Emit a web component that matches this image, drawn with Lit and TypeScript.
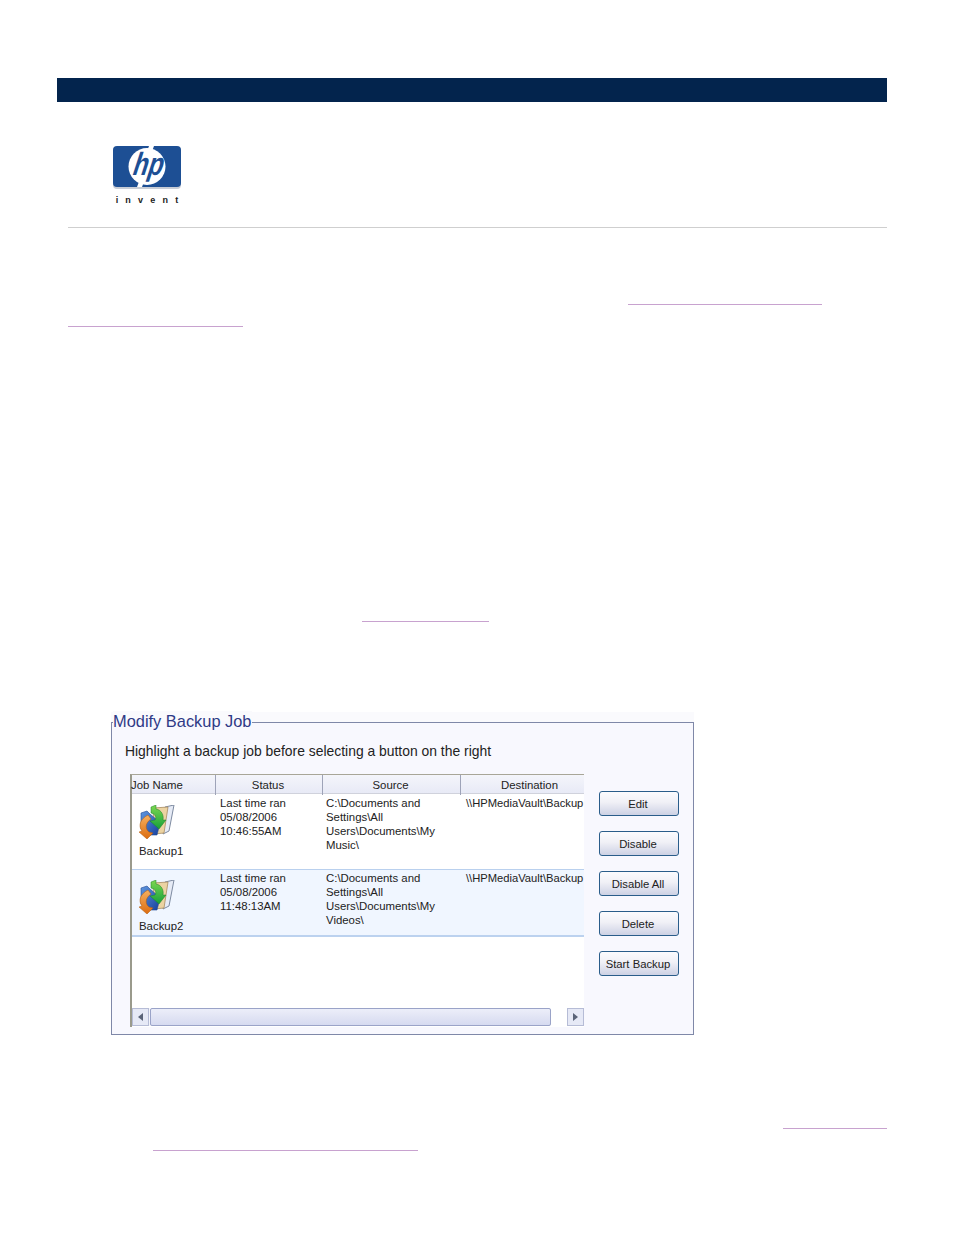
import { LitElement, html, css, svg } from "lit";
import { customElement } from "lit/decorators.js";

const backupIcon = svg`<svg class="job-icon" width="36" height="34" viewBox="0 0 36 34">
  <defs>
    <linearGradient id="bl" x1="0" y1="0" x2="1" y2="1"><stop offset="0" stop-color="#5f97e0"/><stop offset="1" stop-color="#173f9c"/></linearGradient>
    <linearGradient id="gr" x1="0" y1="0" x2="0" y2="1"><stop offset="0" stop-color="#7fd850"/><stop offset="1" stop-color="#15a03a"/></linearGradient>
    <linearGradient id="or" x1="0" y1="0" x2="0" y2="1"><stop offset="0" stop-color="#f6b060"/><stop offset="1" stop-color="#dc6c10"/></linearGradient>
  </defs>
  <path d="M26 2 L35 0 L30 26 L24 29 Z" fill="#e6ebf6" stroke="#7d8aa0" stroke-width="1"/>
  <path d="M14 3 L29 2 L25 28 L15 29 Z" fill="#ecd3a2" stroke="#a88c60" stroke-width=".8"/>
  <path d="M2 8 L8 6 L11 9 L18 15 L21 18 L18 30 L9 30 L2 24 Z" fill="url(#bl)" stroke="#244a90" stroke-width=".6"/>
  <path d="M9 10 C1 14 -1 21 3 26 L0 27 L8 34 L14 28 L10 27 C6 24 6 18 12 14 Z" fill="url(#or)" stroke="#b05808" stroke-width=".5"/>
  <path d="M12 2 L17 0 L17 4 C23 5 25 11 24 15 L27 15 L20 24 L11 16 L16 15 C18 12 16 9 12 8 Z" fill="url(#gr)" stroke="#1c8028" stroke-width=".5"/>
</svg>`;

interface Job { name: string; when: string[]; source: string[]; }
const jobs: Job[] = [
  { name: "Backup1", when: ["Last time ran", "05/08/2006", "10:46:55AM"], source: ["C:\\Documents and", "Settings\\All", "Users\\Documents\\My", "Music\\"] },
  { name: "Backup2", when: ["Last time ran", "05/08/2006", "11:48:13AM"], source: ["C:\\Documents and", "Settings\\All", "Users\\Documents\\My", "Videos\\"] },
];
const actions = ["Edit", "Disable", "Disable All", "Delete", "Start Backup"];

@customElement("app-root")
export class AppRoot extends LitElement {
  static styles = css`
    :host { display: block; width: 954px; height: 1235px; background: #fff; overflow: hidden;
      font-family: "Liberation Sans", Arial, sans-serif; color: #222; }
    .bar { margin: 78px 67px 0 57px; height: 24px; background: #03244d; }
    .logo { margin: 44px 0 0 113px; width: 68px; display: flex; flex-direction: column; align-items: center; }
    .logo svg { display: block; }
    .invent { margin-top: 6px; font: 700 9px/10px "Liberation Sans", sans-serif; letter-spacing: 7.2px; color: #222; white-space: nowrap; margin-right: -7px; }
    .rule { margin: 22px 67px 0 68px; height: 1px; background: #cfcfcf; }
    .link { height: 1px; background: #c8a2cf; }
    .l1 { margin: 76px 0 0 628px; width: 194px; }
    .l2 { margin: 21px 0 0 68px; width: 175px; }
    .l3 { margin: 294px 0 0 362px; width: 127px; }
    .l4 { margin: 93px 0 0 783px; width: 104px; }
    .l5 { margin: 21px 0 0 153px; width: 265px; }
    .window { margin: 100px 0 0 111px; width: 583px; height: 313px; box-sizing: border-box; position: relative;
      border: 1px solid #7f88a8; background: #f8f8fe; padding: 19px 14px 7px 18px; display: flex; flex-direction: column; }
    .window::before { content: ""; position: absolute; left: -1px; right: -1px; top: -11px; height: 10px; background: #fafafd; }
    .title { position: absolute; left: 1px; top: -12px; padding-right: 1px; background: linear-gradient(#fafafd 50%, #f8f8fe 50%);
      font: 400 16.4px/20px "Liberation Sans", sans-serif; color: #2f3a86; white-space: nowrap; }
    .hint { margin-left: -5px; font-size: 13.9px; line-height: 18px; color: #222; white-space: nowrap; }
    .body { display: flex; flex: 1; gap: 15px; margin-top: 14px; min-height: 0; }
    .table { width: 454px; box-sizing: border-box; background: #fff; border-left: 2px solid #9a9a8c; border-top: 1px solid #a8a698;
      display: flex; flex-direction: column; font-size: 11.4px; line-height: 14px; }
    .head, .row { display: grid; grid-template-columns: 84px 107px 138px 123px; }
    .head { height: 19px; box-sizing: border-box; border-bottom: 1px solid #d0d2dc; background: linear-gradient(#f4f5fb, #e8eaf6); }
    .head div { text-align: center; line-height: 20px; border-right: 1px solid #9ea3b8; white-space: nowrap; padding-right: 2px; box-sizing: border-box; }
    .head div:first-child { text-align: left; padding-right: 0; margin-left: -1px; }
    .head div:last-child { border-right: 0; padding: 0 0 0 14px; }
    .row { box-sizing: border-box; height: 76px; padding-top: 2px; border-bottom: 1px solid #b9d0ee; }
    .row.second { height: 67px; padding-top: 1px; background: #f0f6ff; border-bottom: 2px solid #bcd2ef; }
    .cell { padding-left: 4px; white-space: nowrap; }
    .cell.src { padding-left: 3px; }
    .cell.dest { padding-left: 5px; font-size: 11.2px; }
    .name { padding: 9px 0 0 7px; }
    .job-icon { display: block; }
    .name span { display: block; margin-top: 5px; }
    .empty { flex: 1; }
    .scroll { height: 18px; margin-bottom: 1px; display: flex; align-items: stretch; background: #f4f5fb; }
    .sb { width: 17px; box-sizing: border-box; border: 1px solid #b6bcd6; background: #e6e9f6; display: flex; align-items: center; justify-content: center; }
    .thumb { width: 401px; margin-left: 1px; box-sizing: border-box; border: 1px solid #9aa3c8; border-radius: 2px; background: linear-gradient(#eceef9, #d6daf0); }
    .gap { flex: 1; background: #fff; }
    .arrow { width: 0; height: 0; border-top: 4px solid transparent; border-bottom: 4px solid transparent; }
    .arrow.left { border-right: 5px solid #5a6378; }
    .arrow.right { border-left: 5px solid #5a6378; }
    .buttons { width: 80px; display: flex; flex-direction: column; gap: 15px; padding-top: 17px; }
    .btn { height: 25px; box-sizing: border-box; border: 1px solid #2a5d8a; border-radius: 3px; background: linear-gradient(#fbfbfe, #f0f0f6 45%, #cdd1e4);
      font-size: 11.3px; line-height: 24px; text-align: center; white-space: nowrap; color: #222; padding-right: 2px; }
  `;

  render() {
    return html`
      <div class="bar"></div>
      <div class="logo">
        <svg width="68" height="43" viewBox="0 0 68 43">
          <rect x="0" y="1" width="68" height="42" rx="4" fill="#c8cdd6"/>
          <rect x="0" y="0" width="68" height="41" rx="4" fill="#1d4f94"/>
          <circle cx="34" cy="20.5" r="18.5" fill="#fff"/>
          <path d="M36 0 L41 0 L38 8 L33 8 Z M27 33 L32 33 L29 41 L24 41 Z" fill="#fff"/>
          <g transform="translate(33 29) skewX(-18)">
            <text x="0" y="0" text-anchor="middle" font-family="Liberation Sans, sans-serif" font-weight="700" font-size="32" fill="#1d4f94" textLength="30" lengthAdjust="spacingAndGlyphs">hp</text>
          </g>
        </svg>
        <div class="invent">invent</div>
      </div>
      <div class="rule"></div>
      <div class="link l1"></div>
      <div class="link l2"></div>
      <div class="link l3"></div>
      <div class="window">
        <div class="title">Modify Backup Job</div>
        <div class="hint">Highlight a backup job before selecting a button on the right</div>
        <div class="body">
          <div class="table">
            <div class="head"><div>Job Name</div><div>Status</div><div>Source</div><div>Destination</div></div>
            ${jobs.map((j, i) => html`
              <div class="row ${i === 1 ? "second" : ""}">
                <div class="name">${backupIcon}<span>${j.name}</span></div>
                <div class="cell">${j.when.map((t) => html`${t}<br />`)}</div>
                <div class="cell src">${j.source.map((t) => html`${t}<br />`)}</div>
                <div class="cell dest">\\\\HPMediaVault\\Backup</div>
              </div>`)}
            <div class="empty"></div>
            <div class="scroll">
              <div class="sb"><div class="arrow left"></div></div>
              <div class="thumb"></div>
              <div class="gap"></div>
              <div class="sb"><div class="arrow right"></div></div>
            </div>
          </div>
          <div class="buttons">${actions.map((a) => html`<div class="btn">${a}</div>`)}</div>
        </div>
      </div>
      <div class="link l4"></div>
      <div class="link l5"></div>
    `;
  }
}
